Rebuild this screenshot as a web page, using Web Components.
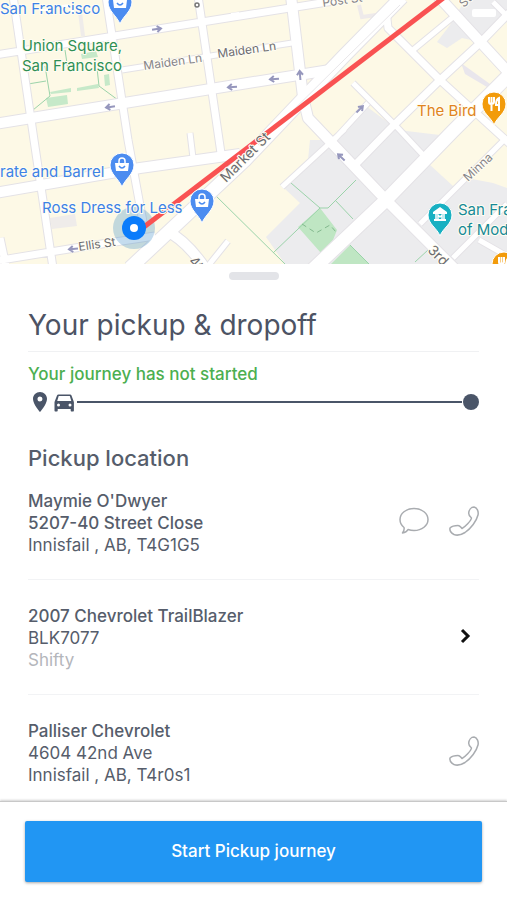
<!DOCTYPE html>
<html lang="en">
<head>
<meta charset="utf-8">
<meta name="viewport" content="width=device-width, initial-scale=1">
<title>Your pickup &amp; dropoff</title>
<style>
  body { margin: 0; background: #fff; font-family: Inter, "Liberation Sans", sans-serif; color: #565d6b; }
</style>
</head>
<body>
<journey-screen></journey-screen>

<template id="t-screen">
  <style>
    :host { display: flex; flex-direction: column; min-height: 100vh; }
    journey-sheet { flex: 1; }
  </style>
  <route-map></route-map>
  <journey-sheet>
    <journey-progress>Your journey has not started</journey-progress>
    <h2 slot="subtitle">Pickup location</h2>
    <stop-row actions="chat call">
      <strong>Maymie O'Dwyer</strong>
      <strong>5207-40 Street Close</strong>
      <span>Innisfail , AB, T4G1G5</span>
    </stop-row>
    <stop-row actions="open">
      <strong>2007 Chevrolet TrailBlazer</strong>
      <span>BLK7077</span>
      <small>Shifty</small>
    </stop-row>
    <stop-row actions="call">
      <strong>Palliser Chevrolet</strong>
      <span>4604 42nd Ave</span>
      <span>Innisfail , AB, T4r0s1</span>
    </stop-row>
  </journey-sheet>
  <action-bar>Start Pickup journey</action-bar>
</template>

<template id="t-map">
  <style>
    :host { display: block; height: 264px; overflow: hidden; background: #fdf9e6; }
    svg { display: block; width: 100%; height: 100%; }
    text { font-family: Inter, "Liberation Sans", sans-serif; paint-order: stroke; stroke: #fffdf2; stroke-width: 2px; stroke-linejoin: round; }
    .n { stroke-width: calc(5px + var(--edge, 0px)); }
    .m { stroke-width: calc(7px + var(--edge, 0px)); }
    .l { stroke-width: calc(10px + var(--edge, 0px)); }
    .xl { stroke-width: calc(13px + var(--edge, 0px)); }
    .casing { --edge: 2px; }
    .place { font-size: 15px; }
    .shop { fill: #3d82e6; }
    .park { fill: #2f8f55; }
    .food { fill: #df8420; }
    .museum { fill: #168a98; }
    .street { font-size: 12px; fill: #858389; }
    .dark { fill: #6b6b70; }
    .big { font-size: 14px; }
  </style>
  <svg viewBox="0 0 507 264" preserveAspectRatio="xMidYMid slice" role="img" aria-label="Route map">
    <defs>
      <g id="roads" fill="none" stroke-linejoin="round">
        <path class="n" d="M122 70L292 43M190 133L193 158M208 266L228 241M282 187L345 129M333 141L368 103M353 83L396 126L424 156M420 224L507 137M453 258L507 204M479 240L507 256M413 50L453 17M493 2L507 16"/>
        <path class="m" d="M-5 55L340 0M-5 261L75 248L155 236M13 -4L34 140L53 268M106 -4L128 140L143 222M198 -4L222 160M386 10L388 28L440 80L510 144M356 164L390 129L440 80L480 43L510 12M0 238L6 266"/>
        <path class="l" d="M-5 124L254 82L330 70M-5 193L140 168L240 154M291 -4L303 97L308 118L386 200L454 268M438 -4L510 74M165 230Q186 240 205 268"/>
        <path class="xl" d="M130 268L245 160L343 57L402 -3M310 272L386 200L453 131L510 74"/>
      </g>
      <path id="arrow" d="M5 0H-3M0 -3L-4 0L0 3" fill="none" stroke="#9697bd" stroke-width="2"/>
      <g id="bag-pin">
        <path d="M0 22C-3 14 -12 9 -12 0A12 12 0 1 1 12 0C12 9 3 14 0 22Z" fill="#4b8cf0" stroke="#fff" stroke-width="1"/>
        <path d="M-7 -2H7L6 6H-6Z" fill="#fff"/>
        <path d="M-3 -2V-4A3 3 0 0 1 3 -4V-2" fill="none" stroke="#fff" stroke-width="1.5"/>
        <path d="M-3 1Q0 5 3 1" fill="none" stroke="#4b8cf0" stroke-width="1.5"/>
      </g>
      <g id="food-pin">
        <path d="M0 20C-3 12 -12 8 -12 -1A12 12 0 1 1 12 -1C12 8 3 12 0 20Z" fill="#f29b0b" stroke="#fff" stroke-width="1"/>
        <path d="M-5 -8V-3Q-5 -1 -3 -1Q0 -1 0 -3V-8M-2.500 -8V6M5 6V-7Q2 -6 2 0H5" fill="none" stroke="#fff" stroke-width="2"/>
      </g>
    </defs>
    <rect width="507" height="264" fill="#fdf9e6"/>
    <path d="M310 140L333 140L366 106L398 130L440 135L430 165L453 186L472 179L493 183L507 188V264H285L266 237L300 203L283 187L308 160Z" fill="#ececee"/>
    <path d="M450 25L465 0H507V22L480 42L462 38L447 48L437 42Z" fill="#ececee"/>
    <path d="M50 218L75 214L77 226L52 229ZM82 12L85 36L81 36L78 12Z" fill="#efecea"/>
    <path d="M461 63L490 84L487 87L465 74Z" fill="#e9e6ec"/>
    <path d="M359 5L362 17L376 15" fill="none" stroke="#eeeaea" stroke-width="4"/>
    <path d="M320 208L337 230L333 240L321 253L298 227ZM350 245L369 264H331Z" fill="#bfe6c3"/>
    <path d="M46 98L67 95L68 104L48 107ZM50 92L71 88V92L51 94ZM77 88L98 84L99 88L77 91ZM104 75L109 74L110 85L105 86ZM81 54L96 51L98 57L82 59Z" fill="#c6e9c9"/>
    <path d="M33 110L50 96L45 66M28 84L46 81M65 50L68 70M99 86L97 68M99 86L118 100M291 183L320 208H328L356 180M320 208L273 253M335 200L353 219M213 193L285 264M350 245L369 264M53 250L54 264M415 262L428 250" fill="none" stroke="#9bd3aa"/>
    <path d="M302 224L316 233L330 225L336 232" fill="none" stroke="#83b98e" stroke-dasharray="5 4"/>

    <use href="#roads" class="casing" stroke="#e4e2e6"/>
    <use href="#roads" stroke="#fff"/>
    <path d="M258 145L345 59L400 5" stroke="#e9e7ea" fill="none"/>

    <use href="#arrow" transform="translate(157 29) rotate(172)"/>
    <use href="#arrow" transform="translate(110 107) rotate(-8)"/>
    <use href="#arrow" transform="translate(232 87) rotate(-4)"/>
    <use href="#arrow" transform="translate(274 79) rotate(-4)"/>
    <use href="#arrow" transform="translate(300 75) rotate(85)"/>
    <use href="#arrow" transform="translate(360 109) rotate(135)"/>
    <use href="#arrow" transform="translate(341 157) rotate(43)"/>
    <use href="#arrow" transform="translate(73 249) rotate(-6)"/>
    <circle cx="197" cy="5" r="2" fill="none" stroke="#777" stroke-width="1.500"/>

    <circle cx="134" cy="228" r="21" fill="#3a8cc8" fill-opacity=".3"/>
    <path d="M140 230L446 -4" stroke="#f95252" stroke-width="5"/>
    <circle cx="134" cy="228" r="12" fill="#0a7cfb"/>
    <circle cx="134" cy="228" r="4" fill="#fff"/>

    <text class="street" transform="translate(144 70) rotate(-8)">Maiden Ln</text>
    <text class="street dark" transform="translate(218 58) rotate(-8)">Maiden Ln</text>
    <text class="street" transform="translate(323 7) rotate(-8)">Post St</text>
    <text class="street dark" transform="translate(79 251) rotate(-8)">Ellis St</text>
    <text class="street dark big" transform="translate(226 183) rotate(-45)">Market St</text>
    <text class="street" transform="translate(468 182) rotate(-43)">Minna</text>
    <text class="street dark big" transform="translate(427 251) rotate(45)">3rd</text>
    <text class="street dark big" transform="translate(188 262) rotate(45)">4th</text>
    <text class="street" transform="translate(464 8) rotate(-45)">St</text>

    <text class="place shop" x="0" y="14">San Francisco</text>
    <text class="place park" x="72" y="51" text-anchor="middle">Union Square,</text>
    <text class="place park" x="72" y="71" text-anchor="middle">San Francisco</text>
    <text class="place shop" x="0" y="177">rate and Barrel</text>
    <text class="place shop" x="42" y="213">Ross Dress for Less</text>
    <text class="place food" x="417" y="116">The Bird</text>
    <text class="place museum" x="458" y="215">San Francisco</text>
    <text class="place museum" x="458" y="235">of Modern Art</text>

    <use href="#bag-pin" x="120" y="2"/>
    <use href="#bag-pin" x="122" y="165"/>
    <use href="#bag-pin" x="202" y="201"/>
    <use href="#food-pin" x="494" y="105"/>
    <use href="#food-pin" x="504" y="265"/>
    <path d="M440 236C437 228 428 224 428 215A12 12 0 1 1 452 215C452 224 443 228 440 236Z" fill="#18b0c2" stroke="#fff"/>
    <path d="M433 212L440 207L447 212V214H433ZM434 219H446V221H434Z" fill="#fff"/>
    <path d="M436 214V219M444 214V219M438 219V215L440 217L442 215V219" fill="none" stroke="#fff" stroke-width="1.500"/>
    <rect x="472" y="9" width="24" height="8" rx="2" fill="#fff"/>
    <path d="M40 10H48M62 6H68M71 11H74M231 14L239 13M244 15H250" stroke="#fff" stroke-width="2"/>
  </svg>
</template>

<template id="t-sheet">
  <style>
    :host { display: block; background: #fff; padding: 8px 28px 0; }
    .handle { width: 50px; height: 8px; margin: 0 auto; border-radius: 4px; background: #e3e4e8; }
    h1 { margin: 26px 0 0; padding-bottom: 7px; border-bottom: 1px solid #f0f1f3; font-size: 28px; line-height: 38px; font-weight: 400; color: #4d5364; }
    ::slotted(h2) { margin: 30px 0 18px; font-size: 22px; line-height: 28px; font-weight: 500; }
    slot:not([name])::slotted(stop-row:last-child) { border-bottom: 0; padding-bottom: 15px; margin-bottom: 0; }
  </style>
  <div class="handle"></div>
  <h1>Your pickup &amp; dropoff</h1>
  <slot name="progress"></slot>
  <slot name="subtitle"></slot>
  <slot></slot>
</template>

<template id="t-progress">
  <style>
    :host { display: block; padding-top: 10px; }
    p { margin: 0; font-size: 17px; line-height: 24px; font-weight: 500; color: #4caf50; }
    .track { display: flex; align-items: center; height: 24px; margin-top: 4px; color: #4a5568; }
    svg { display: block; fill: currentColor; flex: none; }
    .line { flex: 1; height: 2px; margin-left: 1px; background: currentColor; }
    .end { width: 16px; height: 16px; border-radius: 50%; background: currentColor; margin-left: 1px; }
  </style>
  <p><slot></slot></p>
  <div class="track">
    <svg width="24" height="24" viewBox="0 0 24 24"><path d="M12 2C8.130 2 5 5.130 5 9c0 5.250 7 13 7 13s7-7.750 7-13c0-3.870-3.130-7-7-7zm0 9.500a2.500 2.500 0 1 1 0-5 2.500 2.500 0 0 1 0 5z"/></svg>
    <svg width="24" height="24" viewBox="0 0 24 24"><path fill-rule="evenodd" d="M19.500 5.500C19.300 4.900 18.800 4.500 18 4.500H6.500c-.700 0-1.300.400-1.500 1L2.500 12v8.500c0 .600.400 1 1 1h1.200c.600 0 1-.400 1-1V19h13v1.500c0 .600.400 1 1 1h1.200c.600 0 1-.400 1-1V12zM6.700 6h11.100l1.500 5H5.200zM6.500 16.500a1.500 1.500 0 1 1 0-3 1.500 1.500 0 0 1 0 3zm11.500 0a1.500 1.500 0 1 1 0-3 1.500 1.500 0 0 1 0 3z"/></svg>
    <div class="line"></div>
    <div class="end"></div>
  </div>
</template>

<template id="t-row">
  <style>
    :host { display: flex; align-items: center; border-bottom: 1px solid #f2f3f5; padding-bottom: 23px; margin-bottom: 25px; font-size: 17px; line-height: 22px; }
    .lines { flex: 1; }
    ::slotted(*) { display: block; font-weight: 400; font-size: 17px; }
    ::slotted(strong) { font-weight: 500; }
    ::slotted(small) { color: #b4b6bb; }
    .actions { display: flex; gap: 20px; padding-bottom: 4px; }
    button { border: 0; padding: 0; background: none; color: #a9acb0; cursor: pointer; }
    button.open { color: #111; }
    svg { display: block; fill: none; stroke: currentColor; stroke-width: 1.5; stroke-linecap: round; stroke-linejoin: round; }
  </style>
  <div class="lines"><slot></slot></div>
  <div class="actions"></div>
</template>

<template id="t-bar">
  <style>
    :host { display: block; position: relative; background: #fff; padding: 19px 25px 18px; border-top: 1px solid #c8c8c8; box-shadow: 0 -1px 2px #0000002e; }
    button { display: block; width: 100%; border: 0; border-radius: 2px; padding: 19px; background: #2196f3; color: #fff; font: 500 17px/23px Inter, "Liberation Sans", sans-serif; box-shadow: 0 1px 3px #00000059; cursor: pointer; }
  </style>
  <button type="button"><slot></slot></button>
</template>

<script>
  class TemplateElement extends HTMLElement {
    constructor() {
      super();
      const source = document.getElementById(this.constructor.template);
      this.attachShadow({ mode: "open" }).append(source.content.cloneNode(true));
    }
  }

  const ACTIONS = {
    chat: ["Send message", '<svg width="30" height="30" viewBox="0 0 30 30"><path d="M5 21.500C2.500 19.500 1 17 1 13.500C1 7.500 7 2.500 15 2.500S29 7.500 29 13.500 23 24.500 15 24.500C12.500 24.500 10.500 24 9 23.500C8 25.500 6 26.700 3.500 27C5 25 5.500 23.500 5 21.500Z"/></svg>'],
    call: ["Call", '<svg width="30" height="30" viewBox="0 0 30 30"><path d="M25 1C22 1 20 4 19.700 7C19.500 9.500 20.500 10.500 22.500 12C22 15 16 21 13 22.500C11.500 21 11 19.500 9 19.500C6 19.500 3 20 1 22C.500 24.500 2 27 5 28.500C8 29.700 12 29 16 26.500C22 22.500 27.500 15 29 9C29.800 5.500 28 1.500 25 1Z"/></svg>'],
    open: ["View vehicle", '<svg width="30" height="30" viewBox="0 0 30 30"><path d="M13 9l6 6-6 6" stroke-width="3" stroke-linecap="butt" stroke-linejoin="miter"/></svg>']
  };

  class RouteMap extends TemplateElement { static template = "t-map"; }
  class JourneySheet extends TemplateElement { static template = "t-sheet"; }
  class JourneyProgress extends TemplateElement {
    static template = "t-progress";
    connectedCallback() { this.slot = "progress"; }
  }
  class ActionBar extends TemplateElement { static template = "t-bar"; }
  class StopRow extends TemplateElement {
    static template = "t-row";
    connectedCallback() {
      const box = this.shadowRoot.querySelector(".actions");
      box.replaceChildren(...this.getAttribute("actions").split(" ").map(name => {
        const button = document.createElement("button");
        const [label, icon] = ACTIONS[name];
        button.type = "button";
        button.className = name;
        button.setAttribute("aria-label", label);
        button.innerHTML = icon;
        return button;
      }));
    }
  }
  class JourneyScreen extends TemplateElement { static template = "t-screen"; }

  customElements.define("route-map", RouteMap);
  customElements.define("journey-sheet", JourneySheet);
  customElements.define("journey-progress", JourneyProgress);
  customElements.define("stop-row", StopRow);
  customElements.define("action-bar", ActionBar);
  customElements.define("journey-screen", JourneyScreen);
</script>
</body>
</html>
